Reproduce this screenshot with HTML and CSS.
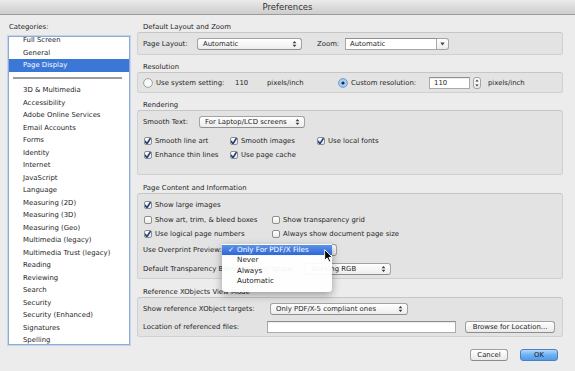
FILE: index.html
```html
<!DOCTYPE html>
<html lang="en">
<head>
  <meta charset="UTF-8">
  <meta name="viewport" content="width=device-width, initial-scale=1.0">
  <title>Preferences</title>
  <link rel="stylesheet" href="styles.css">
</head>
<body>
  <div class="window">
    <div class="titlebar">Preferences</div>
    <div class="main">
      <div class="sidebar">
        <div class="cat-label">Categories:</div>
        <div class="cat-list">
          <ul class="cat-items">
            <li>Full Screen</li>
            <li>General</li>
            <li class="selected">Page Display</li>
            <li class="separator"><span></span></li>
            <li>3D &amp; Multimedia</li>
            <li>Accessibility</li>
            <li>Adobe Online Services</li>
            <li>Email Accounts</li>
            <li>Forms</li>
            <li>Identity</li>
            <li>Internet</li>
            <li>JavaScript</li>
            <li>Language</li>
            <li>Measuring (2D)</li>
            <li>Measuring (3D)</li>
            <li>Measuring (Geo)</li>
            <li>Multimedia (legacy)</li>
            <li>Multimedia Trust (legacy)</li>
            <li>Reading</li>
            <li>Reviewing</li>
            <li>Search</li>
            <li>Security</li>
            <li>Security (Enhanced)</li>
            <li>Signatures</li>
            <li>Spelling</li>
          </ul>
        </div>
      </div>

      <div class="panel">
        <div class="section">
          <div class="section-title">Default Layout and Zoom</div>
          <div class="group g-layout">
            <div class="row">
              <span class="label" style="width:54px">Page Layout:</span>
              <div class="select" style="width:105px">
                <span>Automatic</span>
                <svg class="updown" width="5" height="8" viewBox="0 0 5 8"><path d="M0.6 3.2 L2.5 0.9 L4.4 3.2 Z M0.6 4.8 L2.5 7.1 L4.4 4.8 Z"/></svg>
              </div>
              <span class="label zoom-label">Zoom:</span>
              <div class="combo">
                <div class="combo-field">Automatic</div>
                <div class="combo-btn">
                  <svg width="5" height="4" viewBox="0 0 5 4"><path d="M0.3 0.5 L4.7 0.5 L2.5 3.6 Z"/></svg>
                </div>
              </div>
            </div>
          </div>
        </div>

        <div class="section">
          <div class="section-title">Resolution</div>
          <div class="group g-resolution">
            <div class="row">
              <div class="res-left">
                <svg class="radio" width="10" height="10" viewBox="0 0 10 10"><circle cx="5" cy="5" r="4.4" fill="#f9f9f9" stroke="#8d8d8d" stroke-width="0.8"/></svg>
                <span class="label" style="width:79px">Use system setting:</span>
                <span class="label" style="width:32px">110</span>
                <span class="label">pixels/inch</span>
              </div>
              <svg class="radio" width="10" height="10" viewBox="0 0 10 10"><circle cx="5" cy="5" r="4.4" fill="#a9cff4" stroke="#5d88c2" stroke-width="0.8"/><circle cx="5" cy="5" r="1.6" fill="#1b2a44"/></svg>
              <span class="label" style="width:78px">Custom resolution:</span>
              <div class="field" style="width:41px">110</div>
              <div class="stepper">
                <svg width="6" height="10" viewBox="0 0 6 10"><path d="M1.3 3.6 L3 1.6 L4.7 3.6 Z M1.3 6.4 L3 8.4 L4.7 6.4 Z"/></svg>
              </div>
              <span class="label units">pixels/inch</span>
            </div>
          </div>
        </div>

        <div class="section">
          <div class="section-title">Rendering</div>
          <div class="group g-rendering">
            <div class="row">
              <span class="label" style="width:56px">Smooth Text:</span>
              <div class="select" style="width:106px">
                <span>For Laptop/LCD screens</span>
                <svg class="updown" width="5" height="8" viewBox="0 0 5 8"><path d="M0.6 3.2 L2.5 0.9 L4.4 3.2 Z M0.6 4.8 L2.5 7.1 L4.4 4.8 Z"/></svg>
              </div>
            </div>
            <div class="check-grid render-grid">
              <div class="check on">Smooth line art</div>
              <div class="check on">Smooth images</div>
              <div class="check on">Use local fonts</div>
              <div class="check on">Enhance thin lines</div>
              <div class="check on">Use page cache</div>
            </div>
          </div>
        </div>

        <div class="section">
          <div class="section-title">Page Content and Information</div>
          <div class="group g-content">
            <div class="check-grid content-grid">
              <div class="check on">Show large images</div>
              <div></div>
              <div class="check">Show art, trim, &amp; bleed boxes</div>
              <div class="check">Show transparency grid</div>
              <div class="check on">Use logical page numbers</div>
              <div class="check">Always show document page size</div>
            </div>
            <div class="row overprint-row">
              <span class="label" style="width:80px">Use Overprint Preview:</span>
              <div class="menu-anchor">
                <div class="select" style="width:114px">
                  <span>Only For PDF/X Files</span>
                  <svg class="updown" width="5" height="8" viewBox="0 0 5 8"><path d="M0.6 3.2 L2.5 0.9 L4.4 3.2 Z M0.6 4.8 L2.5 7.1 L4.4 4.8 Z"/></svg>
                </div>
                <ul class="popup">
                  <li class="active"><span class="tick">✓</span>Only For PDF/X Files</li>
                  <li>Never</li>
                  <li>Always</li>
                  <li>Automatic</li>
                </ul>
                <svg class="cursor" width="10" height="14" viewBox="0 0 10 14"><path d="M0.7 0.7 L0.7 11.2 L3.2 8.9 L5.1 12.9 L6.7 12.2 L4.9 8.3 L8.3 8.3 Z" fill="#000" stroke="#fff" stroke-width="0.9"/></svg>
              </div>
            </div>
            <div class="row blend-row">
              <span class="label" style="width:162px">Default Transparency Blending Color Space:</span>
              <div class="select" style="width:86px">
                <span>Working RGB</span>
                <svg class="updown" width="5" height="8" viewBox="0 0 5 8"><path d="M0.6 3.2 L2.5 0.9 L4.4 3.2 Z M0.6 4.8 L2.5 7.1 L4.4 4.8 Z"/></svg>
              </div>
            </div>
          </div>
        </div>

        <div class="section">
          <div class="section-title">Reference XObjects View Mode</div>
          <div class="group g-xobjects">
            <div class="row">
              <span class="label" style="width:127px">Show reference XObject targets:</span>
              <div class="select" style="width:138px">
                <span>Only PDF/X-5 compliant ones</span>
                <svg class="updown" width="5" height="8" viewBox="0 0 5 8"><path d="M0.6 3.2 L2.5 0.9 L4.4 3.2 Z M0.6 4.8 L2.5 7.1 L4.4 4.8 Z"/></svg>
              </div>
            </div>
            <div class="row location-row">
              <span class="label" style="width:124px">Location of referenced files:</span>
              <div class="field" style="width:189px"></div>
              <button class="btn browse">Browse for Location...</button>
            </div>
          </div>
        </div>

        <div class="footer">
          <button class="btn">Cancel</button>
          <button class="btn primary">OK</button>
        </div>
      </div>
    </div>
  </div>
</body>
</html>
```

FILE: styles.css
```css
body {
  margin: 0;
  padding: 0;
  font-family: "DejaVu Sans", sans-serif;
  font-size: 6.9px;
  color: #1e1e1e;
  background: #ececec;
}

.window {
  width: 575px;
  height: 371px;
  background: #ececec;
  overflow: hidden;
}

.titlebar {
  height: 14px;
  line-height: 14px;
  text-align: center;
  font-size: 8.5px;
  color: #333;
  background: linear-gradient(#ebebeb, #cdcdcd);
  border-bottom: 1px solid #9b9b9b;
}

.main {
  display: flex;
  padding-top: 7px;
}

/* categories */

.sidebar {
  width: 122px;
  padding-left: 8px;
}

.cat-label {
  height: 10px;
  line-height: 10px;
  padding-left: 1px;
  margin-bottom: 4px;
}

.cat-list {
  height: 309px;
  box-sizing: border-box;
  background: white;
  border: 1px solid #8eaad6;
  box-shadow: 0 0 0 1px rgba(130, 170, 225, 0.35);
  overflow: hidden;
}

.cat-items {
  list-style: none;
  margin: -3px 0 0;
  padding: 0;
}

.cat-items li {
  height: 12.5px;
  line-height: 12.5px;
  padding-left: 14px;
  white-space: nowrap;
}

.cat-items li.selected {
  background: #3b77d7;
  color: white;
}

.cat-items li.separator {
  display: flex;
  align-items: center;
  padding: 0 7px 0 4px;
}

.cat-items li.separator span {
  flex: 1;
  height: 2px;
  background: #9c9c9c;
}

/* right panel */

.panel {
  width: 426px;
  margin-left: 7px;
}

.section + .section {
  margin-top: 7px;
}

.section-title {
  height: 10px;
  line-height: 10px;
  padding-left: 6px;
}

.group {
  box-sizing: border-box;
  background: #e3e3e3;
  border: 1px solid #d0d0d0;
  border-top-color: #c6c6c6;
  border-radius: 3px;
  padding-left: 5px;
}

.g-layout { height: 23px; padding-top: 5px; }
.g-resolution { height: 21px; padding-top: 4px; }
.g-rendering { height: 65px; padding-top: 5px; }
.g-content { height: 86px; padding-top: 4px; }
.g-xobjects { height: 40px; padding-top: 5px; }

.section:nth-child(4) { margin-top: 8px; }
.section:nth-child(5) { margin-top: 8px; }

.row {
  display: flex;
  align-items: center;
  height: 12px;
}

.label {
  white-space: nowrap;
  flex-shrink: 0;
}

.zoom-label {
  width: 28px;
  margin-left: 15px;
}

.select {
  height: 12px;
  box-sizing: border-box;
  display: flex;
  align-items: center;
  justify-content: space-between;
  padding: 0 4px 0 5px;
  background: linear-gradient(#ffffff, #ededed);
  border: 1px solid #a3a3a3;
  border-bottom-color: #8f8f8f;
  border-radius: 3px;
  white-space: nowrap;
  flex-shrink: 0;
}

.updown path {
  fill: #3a3a3a;
}

.combo {
  display: flex;
  height: 12px;
}

.combo-field {
  width: 92px;
  box-sizing: border-box;
  padding-left: 4px;
  line-height: 10px;
  background: white;
  border: 1px solid #a7a7a7;
  border-top-color: #8f8f8f;
}

.combo-btn {
  width: 12px;
  box-sizing: border-box;
  display: flex;
  align-items: center;
  justify-content: center;
  background: linear-gradient(#ffffff, #ececec);
  border: 1px solid #a3a3a3;
  border-left: none;
  border-radius: 0 3px 3px 0;
}

.combo-btn path,
.stepper path {
  fill: #444;
}

.res-left {
  display: flex;
  align-items: center;
  width: 195px;
}

.radio {
  margin-right: 3px;
  flex-shrink: 0;
}

.field {
  height: 12px;
  box-sizing: border-box;
  padding-left: 4px;
  line-height: 10px;
  background: white;
  border: 1px solid #aaaaaa;
  border-top-color: #8e8e8e;
  box-shadow: inset 0 1px 1px rgba(0, 0, 0, 0.08);
  flex-shrink: 0;
}

.stepper {
  width: 8px;
  height: 12px;
  box-sizing: border-box;
  margin-left: 3px;
  display: flex;
  align-items: center;
  justify-content: center;
  background: linear-gradient(#ffffff, #ececec);
  border: 1px solid #a3a3a3;
  border-radius: 3px;
}

.units {
  margin-left: 7px;
}

/* checkboxes */

.check-grid {
  display: grid;
  grid-auto-rows: 14px;
  align-items: center;
}

.render-grid {
  grid-template-columns: 86px 87px auto;
  margin-top: 6px;
}

.content-grid {
  grid-template-columns: 128px auto;
  grid-auto-rows: 14.5px;
}

.check {
  display: flex;
  align-items: center;
  white-space: nowrap;
}

.check::before {
  content: "";
  width: 8px;
  height: 8px;
  margin: 0 3px 0 1px;
  box-sizing: border-box;
  border: 1px solid #8e8e8e;
  border-radius: 2px;
  background: linear-gradient(#ffffff, #ebebeb);
  flex-shrink: 0;
}

.check.on::before {
  background:
    url("data:image/svg+xml,%3Csvg xmlns='http://www.w3.org/2000/svg' width='8' height='8' viewBox='0 0 8 8'%3E%3Cpath d='M1 4.2 L3 6.6 L7.6 -0.6' fill='none' stroke='%2325447c' stroke-width='1.7' stroke-linecap='round'/%3E%3C/svg%3E") no-repeat -1px -1px,
    linear-gradient(#ffffff, #ebebeb);
  overflow: visible;
}

/* overprint + popup menu */

.overprint-row {
  margin-top: 2.5px;
}

.menu-anchor {
  position: relative;
}

.popup {
  position: absolute;
  left: -1px;
  top: 0;
  width: 110px;
  margin: 0;
  padding: 1px 0 5px;
  list-style: none;
  background: rgba(255, 255, 255, 0.94);
  border-radius: 0 0 4px 4px;
  box-shadow: 0 3px 9px rgba(0, 0, 0, 0.35);
  z-index: 2;
}

.popup li {
  height: 10.4px;
  line-height: 10.4px;
  padding-left: 15px;
  white-space: nowrap;
  font-size: 7.2px;
}

.popup li.active {
  position: relative;
  background: linear-gradient(#5b92e8, #2e67d9);
  color: white;
}

.tick {
  position: absolute;
  left: 6px;
}

.cursor {
  position: absolute;
  left: 101px;
  top: 5px;
  z-index: 3;
}

.blend-row {
  margin-top: 7px;
}

.location-row {
  margin-top: 6px;
}

/* buttons */

.btn {
  height: 12px;
  padding: 0;
  font-family: "DejaVu Sans", sans-serif;
  font-size: 6.9px;
  color: #1e1e1e;
  background: linear-gradient(#ffffff, #e9e9e9);
  border: 1px solid #a0a0a0;
  border-bottom-color: #8c8c8c;
  border-radius: 3px;
  flex-shrink: 0;
}

.browse {
  width: 90px;
  margin-left: 9px;
}

.footer {
  display: flex;
  justify-content: flex-end;
  gap: 12px;
  margin-top: 12px;
  padding-right: 5px;
}

.footer .btn {
  width: 38px;
}

.btn.primary {
  background: linear-gradient(#b4d8fa, #6cb0f0 50%, #4f9ce9);
  border-color: #4f7fbf;
}
```
